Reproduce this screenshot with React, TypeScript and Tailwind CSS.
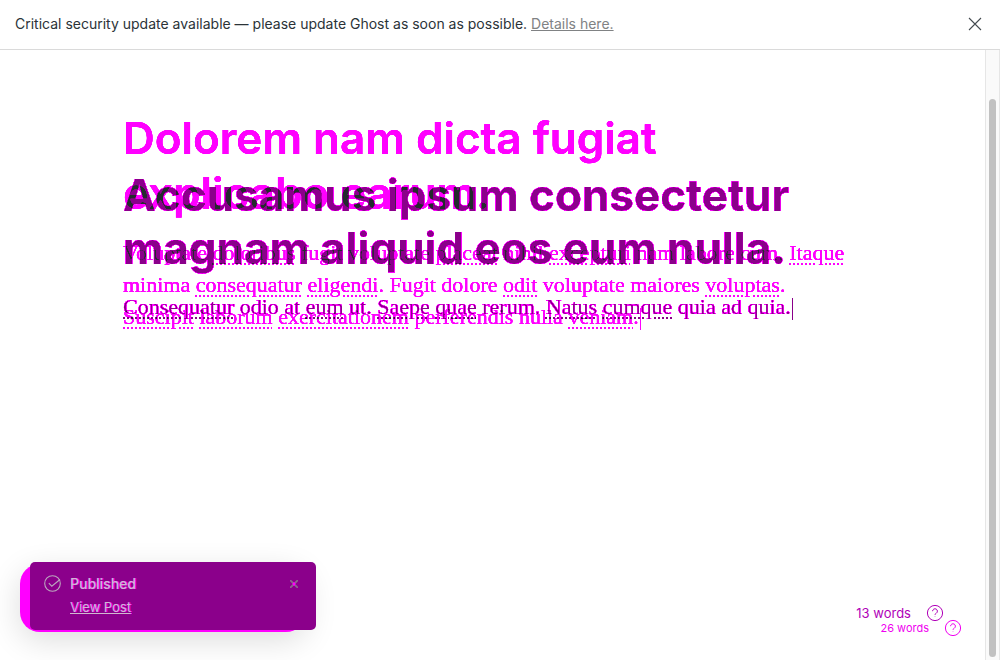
import type { ReactNode } from 'react';

function Misspelt({ children }: { children: ReactNode }) {
  return (
    <span className="underline decoration-dotted decoration-2 underline-offset-3">{children}</span>
  );
}

function Caret() {
  return <span className="ml-px inline-block h-[22px] w-px bg-current align-middle" />;
}

/* Turns the grey levels of the two blended revisions into the diff palette:
   white = unchanged, magenta = old only, purple = new only, slate = both. */
function DiffPalette() {
  return (
    <svg width="0" height="0" className="absolute" aria-hidden="true">
      <filter id="diff-palette" x="0" y="0" width="100%" height="100%" colorInterpolationFilters="sRGB">
        <feComponentTransfer>
          <feFuncR type="table" tableValues="0.14 0.545 0.545 0.545 0.75 1 1 1 1 1" />
          <feFuncG type="table" tableValues="0.17 0 0 0 0 0 0 0 0.15 1" />
          <feFuncB type="table" tableValues="0.18 0.545 0.545 0.545 0.75 1 1 1 1 1" />
        </feComponentTransfer>
      </filter>
    </svg>
  );
}

function HelpButton() {
  return (
    <button type="button" aria-label="Help" className="block">
      <svg width="18" height="18" viewBox="0 0 18 18" fill="none" stroke="currentColor" strokeWidth="1">
        <circle cx="9" cy="9" r="7.6" />
        <path d="M6.6 7.2a2.4 2.4 0 1 1 3.7 2c-.8.5-1.3.8-1.3 1.6" />
        <path d="M8.5 12.5h1" strokeOpacity="0.4" />
      </svg>
    </button>
  );
}

export default function App() {
  return (
    <div className="flex h-screen flex-col overflow-hidden bg-white font-['Inter',sans-serif]">
      <header className="flex h-[50px] shrink-0 items-center justify-between border-b border-[#dadada] px-[15px] pb-[2px] text-sm text-[#2b3338]">
        <p>
          Critical security update available — please update Ghost as soon as possible.{' '}
          <a href="#details" className="text-[#808284] underline">
            Details here.
          </a>
        </p>
        <button type="button" aria-label="Dismiss" className="mr-[3px]">
          <svg width="14" height="14" viewBox="0 0 14 14" stroke="#444b50" strokeWidth="1.1">
            <path d="M1 1l12 12M13 1L1 13" />
          </svg>
        </button>
      </header>

      <div className="relative flex min-h-0 flex-1">
        <main className="min-w-0 flex-1">
          <DiffPalette />
          <div className="isolate grid bg-white pr-[122px] pl-[123px] [filter:url(#diff-palette)]">
            <article className="pt-[61px] text-[#555555] mix-blend-difference [grid-area:1/1]">
              <h1 className="text-[44px] leading-[55px] font-semibold">
                Dolorem nam dicta fugiat
                <br />
                explicabo earum.
              </h1>
              <p className="pt-[16px] font-['Liberation_Serif',serif] text-[22px] leading-[32px]">
                Voluptate <Misspelt>doloribus</Misspelt> fugit voluptate <Misspelt>placeat</Misspelt> nihil{' '}
                <Misspelt>excepturi</Misspelt> nam labore cum. <Misspelt>Itaque</Misspelt>
                <br />
                minima <Misspelt>consequatur</Misspelt> <Misspelt>eligendi</Misspelt>. Fugit dolore{' '}
                <Misspelt>odit</Misspelt> voluptate maiores <Misspelt>voluptas</Misspelt>.
                <br />
                <Misspelt>Suscipit</Misspelt> <Misspelt>laborum</Misspelt>{' '}
                <Misspelt>exercitationem</Misspelt> perferendis nulla <Misspelt>veniam</Misspelt>.
                <Caret />
              </p>
            </article>
            <article className="pt-[119px] text-[#aaaaaa] mix-blend-difference [grid-area:1/1]">
              <h1 className="text-[44px] leading-[53px] font-bold">
                Accusamus ipsum consectetur
                <br />
                magnam aliquid eos eum nulla.
              </h1>
              <p className="pt-[16px] font-['Liberation_Serif',serif] text-[22px] leading-[32px]">
                <Misspelt>Consequatur</Misspelt> odio at <Misspelt>eum</Misspelt> ut.{' '}
                <Misspelt>Saepe</Misspelt> <Misspelt>quae</Misspelt> rerum. <Misspelt>Natus</Misspelt>{' '}
                <Misspelt>cumque</Misspelt> quia ad quia.
                <Caret />
              </p>
            </article>
          </div>
        </main>

        <div className="w-[15px] shrink-0 border-x border-[#e6e6e6] bg-[#fafafa] px-[3px] pt-[49px] pb-[3px]">
          <div className="h-full rounded-full bg-[#c1c1c1]" />
        </div>

        <div className="absolute bottom-[28px] left-[20px] h-[68px] w-[286px] rounded-[20px] bg-[#ff00ff] shadow-[0_8px_32px_rgba(0,0,0,0.14)]" />
        <div
          role="status"
          className="absolute bottom-[30px] left-[30px] flex h-[68px] w-[286px] items-start rounded-[5px] bg-[#8b008b] px-[14px] pt-[13px] text-[#d0b8d0] [text-shadow:1px_0_#ff00ff]"
        >
          <svg width="17" height="17" viewBox="0 0 17 17" fill="none" stroke="#bba8be" strokeWidth="1.1">
            <circle cx="8.5" cy="8.5" r="7.8" />
            <path d="M4.8 8.2l3 3L16 4.5" />
          </svg>
          <div className="flex-1 pl-[9px]">
            <p className="text-sm leading-[18px] font-medium">Published</p>
            <a href="#post" className="block pt-[5px] text-[13px] leading-[18px] underline">
              View Post
            </a>
          </div>
          <button type="button" aria-label="Close" className="mt-[5px] mr-[4px]">
            <svg width="8" height="8" viewBox="0 0 8 8" strokeWidth="1.8">
              <path d="M0 0l8 8M8 0L0 8" stroke="#8a6a8a" />
              <path d="M3 3l2 2M5 3L3 5" stroke="#ff00ff" />
            </svg>
          </button>
        </div>

        <div className="absolute right-[56px] bottom-[38px] flex items-center gap-[15px] text-[13px] leading-[18px] text-[#b000b8]">
          <span>13 words</span>
          <HelpButton />
        </div>
        <div className="absolute right-[38px] bottom-[23px] flex items-center gap-[15px] text-[11px] leading-[18px] text-[#f000f0]">
          <span>26 words</span>
          <HelpButton />
        </div>
      </div>
    </div>
  );
}
